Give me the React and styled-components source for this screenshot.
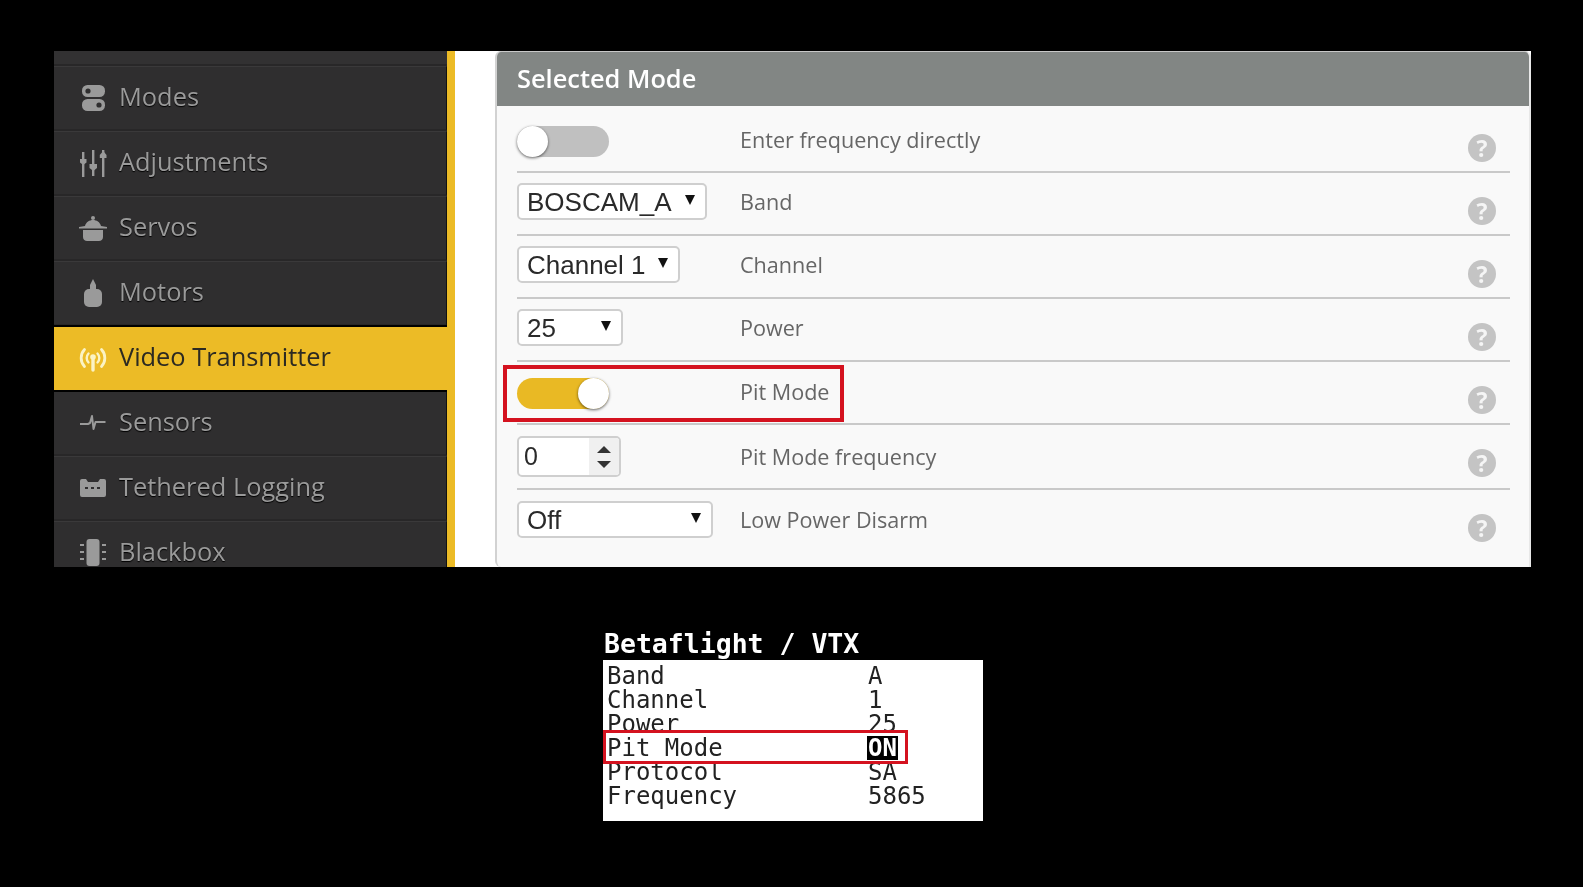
import React from "react";
import styled, { createGlobalStyle } from "styled-components";

const GlobalStyle = createGlobalStyle`
  html, body {
    margin: 0;
    background: #000;
  }
  * {
    box-sizing: border-box;
  }
`;

const navItems = [
  { name: "Modes", icon: "modes" },
  { name: "Adjustments", icon: "adjustments" },
  { name: "Servos", icon: "servos" },
  { name: "Motors", icon: "motors" },
  { name: "Video Transmitter", icon: "vtx", active: true },
  { name: "Sensors", icon: "sensors" },
  { name: "Tethered Logging", icon: "logging" },
  { name: "Blackbox", icon: "blackbox" },
];

const osdRows = [
  { name: "Band", value: "A" },
  { name: "Channel", value: "1" },
  { name: "Power", value: "25" },
  { name: "Pit Mode", value: "ON", active: true },
  { name: "Protocol", value: "SA" },
  { name: "Frequency", value: "5865" },
];

function NavIcon({ type }) {
  const dark = "#2f2e2f";
  return (
    <svg width="28" height="28" viewBox="0 0 28 28" fill="currentColor">
      {type === "modes" && (
        <>
          <rect x="3" y="1" width="23" height="12" rx="5.5" />
          <rect x="3" y="15" width="23" height="12" rx="5.5" />
          <circle cx="9" cy="7" r="2.6" fill={dark} />
          <circle cx="20" cy="21" r="2.6" fill={dark} />
        </>
      )}
      {type === "adjustments" && (
        <>
          <rect x="3" y="3" width="2.4" height="25" />
          <rect x="13" y="1" width="2.4" height="26" />
          <rect x="23" y="1" width="2.4" height="27" />
          <path d="M1 10h6.500v3.500L4.200 16 1 13.500z" />
          <path d="M10.500 15h7.500v4l-3.700 3-3.800-3z" />
          <path d="M20.800 6l3.400-4 3.300 4v3h-6.700z" />
        </>
      )}
      {type === "servos" && (
        <>
          <circle cx="14" cy="4" r="2" />
          <path d="M6 12c1-4 4.500-6 8-6s7 2 8 6l6 1v1.500H0V13z" />
          <path d="M4 16h20v7c0 2.500-2 4-4 4H8c-2 0-4-1.500-4-4z" />
        </>
      )}
      {type === "motors" && (
        <>
          <path d="M14 0l3 6v5h-6V6z" />
          <rect x="5" y="10" width="18" height="18" rx="5" />
        </>
      )}
      {type === "vtx" && (
        <g fill="none" stroke="currentColor" strokeLinecap="round">
          <path d="M9.500 8.500a6.500 6.500 0 0 0 0 9" strokeWidth="2.400" />
          <path d="M18.500 8.500a6.500 6.500 0 0 1 0 9" strokeWidth="2.400" />
          <path d="M5.500 4.500a12.500 12.500 0 0 0 0 17" strokeWidth="2.800" />
          <path d="M22.500 4.500a12.500 12.500 0 0 1 0 17" strokeWidth="2.800" />
          <circle cx="14" cy="12" r="2.800" fill="currentColor" stroke="none" />
          <path d="M14 13v12" strokeWidth="3.400" />
        </g>
      )}
      {type === "sensors" && (
        <path
          d="M1 15h8l2-1 2-7 1.500 13 2-7h10"
          fill="none"
          stroke="currentColor"
          strokeWidth="2"
          strokeLinejoin="round"
        />
      )}
      {type === "logging" && (
        <>
          <path d="M1 7a2 2 0 0 1 2-2h4l2 3h10l2-3h4a2 2 0 0 1 2 2v14a2 2 0 0 1-2 2H3a2 2 0 0 1-2-2z" />
          <rect x="6" y="13" width="3" height="2" fill={dark} />
          <rect x="12" y="13" width="3" height="2" fill={dark} />
          <rect x="18" y="13" width="3" height="2" fill={dark} />
        </>
      )}
      {type === "blackbox" && (
        <>
          <rect x="7.500" y="0" width="13" height="27" rx="3" />
          <rect x="1" y="5" width="4" height="2" />
          <rect x="1" y="12" width="4" height="2" />
          <rect x="1" y="19" width="4" height="2" />
          <rect x="23" y="5" width="4" height="2" />
          <rect x="23" y="12" width="4" height="2" />
          <rect x="23" y="19" width="4" height="2" />
        </>
      )}
    </svg>
  );
}

function SelectBox({ $width, value }) {
  return (
    <SelectWrap $width={$width}>
      <NativeSelect defaultValue={value}>
        <option>{value}</option>
      </NativeSelect>
    </SelectWrap>
  );
}

export default function App() {
  return (
    <Page>
      <GlobalStyle />
      <Screen>
        <Sidebar>
          <NavStub />
          {navItems.map((item) => (
            <NavRow key={item.name} $active={item.active}>
              <NavIconBox $active={item.active}>
                <NavIcon type={item.icon} />
              </NavIconBox>
              <NavText>{item.name}</NavText>
            </NavRow>
          ))}
        </Sidebar>
        <Gutter />
        <Panel>
          <PanelHead>Selected Mode</PanelHead>
          <Row $height={67}>
            <Field $top={20}>
              <Control>
                <Switch />
              </Control>
              <Label $raised>Enter frequency directly</Label>
            </Field>
            <Help $top={28}>?</Help>
          </Row>
          <Row $height={63}>
            <Field $top={10}>
              <Control>
                <SelectBox $width={190} value="BOSCAM_A" />
              </Control>
              <Label>Band</Label>
            </Field>
            <Help>?</Help>
          </Row>
          <Row $height={63}>
            <Field $top={10}>
              <Control>
                <SelectBox $width={163} value="Channel 1" />
              </Control>
              <Label>Channel</Label>
            </Field>
            <Help>?</Help>
          </Row>
          <Row $height={63}>
            <Field $top={10}>
              <Control>
                <SelectBox $width={106} value="25" />
              </Control>
              <Label>Power</Label>
            </Field>
            <Help>?</Help>
          </Row>
          <Row $height={63}>
            <Field $top={16}>
              <Control>
                <Switch $on />
              </Control>
              <Label $raised>Pit Mode</Label>
            </Field>
            <Help>?</Help>
            <RedBox />
          </Row>
          <Row $height={65}>
            <Field $top={11}>
              <Control>
                <NumberBox>
                  <NumberValue>0</NumberValue>
                  <Spinner>
                    <SpinUp />
                    <SpinDown />
                  </Spinner>
                </NumberBox>
              </Control>
              <Label>Pit Mode frequency</Label>
            </Field>
            <Help>?</Help>
          </Row>
          <Row $height={77} $last>
            <Field $top={11}>
              <Control>
                <SelectBox $width={196} value="Off" />
              </Control>
              <Label>Low Power Disarm</Label>
            </Field>
            <Help>?</Help>
          </Row>
        </Panel>
      </Screen>
      <Osd>
        <OsdTitle>Betaflight / VTX</OsdTitle>
        <OsdBox>
          {osdRows.map((row) => (
            <OsdRow key={row.name} $active={row.active}>
              <span>{row.name}</span>
              <OsdValue $active={row.active}>{row.value}</OsdValue>
            </OsdRow>
          ))}
        </OsdBox>
      </Osd>
    </Page>
  );
}

const Page = styled.div`
  width: 1583px;
  height: 887px;
  padding: 51px 52px 0 54px;
  background: #000;
  overflow: hidden;
  filter: blur(0.4px);
`;

const Screen = styled.div`
  display: flex;
  height: 516px;
  overflow: hidden;
  background: #fff;
`;

const Sidebar = styled.nav`
  width: 393px;
  flex-shrink: 0;
  background: #2f2e2f;
`;

const NavStub = styled.div`
  height: 15px;
  background: #323132;
  border-bottom: 2px solid #282728;
`;

const NavRow = styled.div`
  display: flex;
  align-items: center;
  gap: 12px;
  position: relative;
  z-index: ${(p) => (p.$active ? 1 : 0)};
  width: ${(p) => (p.$active ? "401px" : "393px")};
  height: 65px;
  padding: 0 0 5px 25px;
  font-family: "Open Sans", sans-serif;
  font-size: 25.4px;
  color: ${(p) => (p.$active ? "#2c2a22" : "#9a9a9a")};
  background: ${(p) => (p.$active ? "#ecbb26" : "#2f2e2f")};
  border-top: ${(p) => (p.$active ? "none" : "1px solid #3a393a")};
  border-bottom: ${(p) => (p.$active ? "none" : "2px solid #282728")};
  border-right: ${(p) => (p.$active ? "none" : "1px solid #111")};
  text-shadow: ${(p) => (p.$active ? "none" : "0 1px 1px #000")};
  ${(p) =>
    p.$active &&
    `
    &::before, &::after {
      content: "";
      position: absolute;
      left: 0;
      width: 393px;
      height: 2px;
      background: #000;
    }
    &::before { top: -1px; }
    &::after { bottom: -1px; }
  `}
`;

const NavText = styled.span`
  white-space: nowrap;
`;

const NavIconBox = styled.span`
  display: flex;
  width: 28px;
  height: 28px;
  margin-top: 5px;
  color: ${(p) => (p.$active ? "#fbf3c4" : "#9a9a9a")};
`;

const Gutter = styled.div`
  width: 48px;
  flex-shrink: 0;
  background: #fff;
  border-left: 8px solid #ecbb26;
`;

const Panel = styled.section`
  flex: 1;
  height: 100%;
  background: #f9f9f9;
  border-left: 2px solid #d2d2d2;
  border-right: 2px solid #e8e8e8;
  border-top: 1px solid #c8c8c8;
  border-radius: 6px 6px 0 6px;
  overflow: hidden;
`;

const PanelHead = styled.h2`
  margin: 0;
  height: 54px;
  padding: 0 0 2px 20px;
  display: flex;
  align-items: center;
  font-family: "Open Sans", sans-serif;
  font-size: 25.4px;
  font-weight: 600;
  color: #fff;
  background: #828684;
`;

const Row = styled.div`
  position: relative;
  display: flex;
  justify-content: space-between;
  align-items: flex-start;
  height: ${(p) => p.$height}px;
  margin: 0 19px 0 20px;
  padding-right: 14px;
  border-bottom: ${(p) => (p.$last ? "none" : "2px solid #c9c9c9")};
`;

const Field = styled.div`
  display: flex;
  align-items: center;
  padding-top: ${(p) => p.$top}px;
`;

const Control = styled.div`
  width: 223px;
  flex-shrink: 0;
`;

const Label = styled.div`
  margin-bottom: ${(p) => (p.$raised ? "4px" : "0")};
  font-family: "Open Sans", sans-serif;
  font-size: 21.600px;
  line-height: 26px;
  color: #666;
`;

const Help = styled.div`
  display: flex;
  align-items: center;
  justify-content: center;
  width: 28px;
  height: 28px;
  margin-top: ${(p) => p.$top ?? 24}px;
  border-radius: 50%;
  background: #c4c4c4;
  font-family: "Open Sans", sans-serif;
  font-size: 23px;
  font-weight: 700;
  color: #f5f5f5;
`;

const Switch = styled.div`
  position: relative;
  width: 92px;
  height: 31px;
  border-radius: 16px;
  background: ${(p) => (p.$on ? "#e9b924" : "#c0c0c0")};
  &::after {
    content: "";
    position: absolute;
    top: 0;
    left: ${(p) => (p.$on ? "61px" : "0")};
    width: 31px;
    height: 31px;
    border-radius: 50%;
    background: #fff;
    box-shadow: 0 1px 3px rgba(0, 0, 0, 0.6);
  }
`;

const SelectWrap = styled.div`
  position: relative;
  width: ${(p) => p.$width}px;
  height: 37px;
  &::after {
    content: "";
    position: absolute;
    top: 12px;
    right: 12px;
    border-left: 5px solid transparent;
    border-right: 5px solid transparent;
    border-top: 10px solid #111;
    pointer-events: none;
  }
`;

const NativeSelect = styled.select`
  appearance: none;
  width: 100%;
  height: 100%;
  padding: 0 0 0 8px;
  background: #fff;
  border: 2px solid #cfcfcf;
  border-radius: 5px;
  font-family: "Liberation Sans", Arial, sans-serif;
  font-size: 26px;
  color: #2a2a2a;
`;

const NumberBox = styled.div`
  display: flex;
  width: 104px;
  height: 41px;
  background: #fff;
  border: 2px solid #cfcfcf;
  border-radius: 5px;
  overflow: hidden;
`;

const NumberValue = styled.div`
  flex: 1;
  padding-left: 5px;
  font-family: "Liberation Sans", Arial, sans-serif;
  font-size: 25px;
  line-height: 36px;
  color: #2a2a2a;
`;

const Spinner = styled.div`
  width: 30px;
  display: flex;
  flex-direction: column;
  align-items: center;
  justify-content: center;
  gap: 8px;
  background: #f0f0f0;
`;

const SpinUp = styled.div`
  border-left: 7px solid transparent;
  border-right: 7px solid transparent;
  border-bottom: 7px solid #333;
`;

const SpinDown = styled.div`
  border-left: 7px solid transparent;
  border-right: 7px solid transparent;
  border-top: 7px solid #333;
`;

const RedBox = styled.div`
  position: absolute;
  left: -14px;
  top: 3px;
  width: 341px;
  height: 57px;
  border: 4px solid #d4121f;
  pointer-events: none;
`;

const Osd = styled.div`
  margin: 61px 0 0 549px;
  width: 380px;
`;

const OsdTitle = styled.div`
  height: 32px;
  padding-left: 1px;
  font-family: "DejaVu Sans Mono", monospace;
  font-size: 26.500px;
  font-weight: 700;
  line-height: 32px;
  color: #fff;
  white-space: pre;
`;

const OsdBox = styled.div`
  height: 161px;
  padding-top: 4px;
  background: #fff;
`;

const OsdRow = styled.div`
  position: relative;
  display: grid;
  grid-template-columns: 258px auto;
  justify-content: start;
  align-items: center;
  height: ${(p) => (p.$active ? "34px" : "24px")};
  width: ${(p) => (p.$active ? "305px" : "100%")};
  margin: ${(p) => (p.$active ? "-6px 0 -4px" : "0")};
  padding-left: ${(p) => (p.$active ? "1px" : "4px")};
  padding-top: ${(p) => (p.$active ? "2px" : "0")};
  background: #fff;
  border: ${(p) => (p.$active ? "3px solid #d4121f" : "none")};
  z-index: ${(p) => (p.$active ? 1 : 0)};
  font-family: "DejaVu Sans Mono", monospace;
  font-size: 24px;
  line-height: 24px;
  color: #222;
`;

const OsdValue = styled.span`
  justify-self: start;
  margin-left: ${(p) => (p.$active ? "2px" : "0")};
  padding: ${(p) => (p.$active ? "0 1px" : "0 3px")};
  background: ${(p) => (p.$active ? "#000" : "transparent")};
  color: ${(p) => (p.$active ? "#fff" : "#222")};
  font-weight: ${(p) => (p.$active ? 700 : 400)};
`;
